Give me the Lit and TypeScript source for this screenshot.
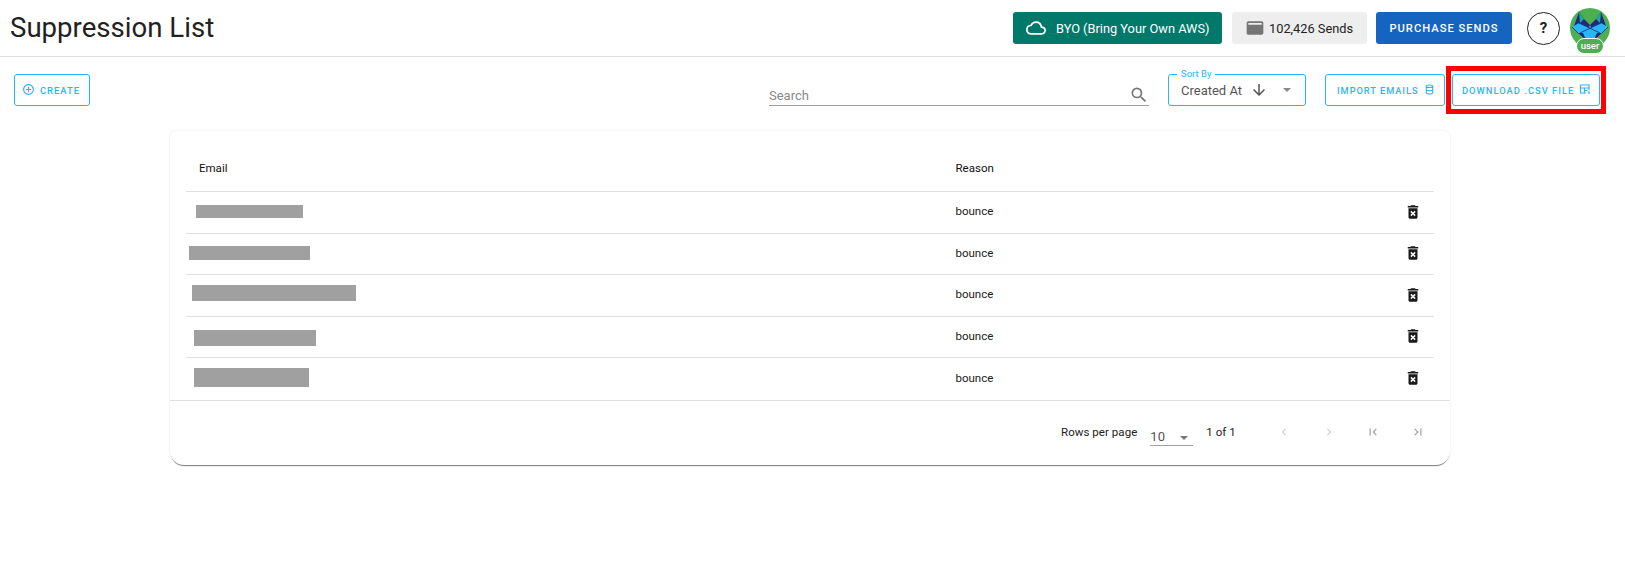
import { LitElement, html, css, svg } from "lit";
import { customElement } from "lit/decorators.js";

const rows = [
  { ml: 10, w: 107, h: 13, dy: -1 },
  { ml: 2.5, w: 121, h: 14, dy: -1 },
  { ml: 6, w: 164, h: 16, dy: -2 },
  { ml: 8, w: 122, h: 16, dy: 1 },
  { ml: 7.5, w: 115, h: 19, dy: -1 },
];

const trash = svg`<svg class="trash" viewBox="0 0 24 24" width="18" height="18"><path fill="#1a1a1a" d="M6 19c0 1.1.9 2 2 2h8c1.1 0 2-.9 2-2V7H6v12zm2.46-7.12 1.41-1.41L12 12.59l2.12-2.12 1.41 1.41L13.41 14l2.12 2.12-1.41 1.41L12 15.41l-2.12 2.12-1.41-1.41L10.59 14l-2.13-2.12zM15.5 4l-1-1h-5l-1 1H5v2h14V4z"/></svg>`;

@customElement("app-root")
export class AppRoot extends LitElement {
  static styles = css`
    :host { display: block; width: 1625px; height: 572px; background: #fff; font-family: Roboto, sans-serif; color: #212121; overflow: hidden; }
    .top { height: 57px; box-sizing: border-box; border-bottom: 1px solid #e0e0e0; display: flex; align-items: center; padding: 0 15px 0 10px; }
    h1 { margin: 0 auto 0 0; font-size: 27.6px; font-weight: 400; line-height: 56px; height: 56px; color: #212121; }
    .pill { height: 32px; border-radius: 3px; display: flex; align-items: center; box-sizing: border-box; font-size: 12.8px; }
    .byo { width: 209px; background: #00796b; color: #fff; margin-right: 10px; padding-left: 13px; gap: 10px; }
    .sends { width: 135px; background: #eee; color: #212121; padding-left: 13px; gap: 4px; margin-right: 9px; }
    .buy { width: 136px; background: #1565c0; color: #fff; justify-content: center; font-size: 11.2px; font-weight: 500; letter-spacing: 1px; margin-right: 15px; }
    .help { width: 33px; height: 33px; border: 1px solid #212121; border-radius: 50%; box-sizing: border-box; display: flex; align-items: center; justify-content: center; font-weight: 700; font-size: 15px; margin-right: 10px; }
    .avatar { position: relative; width: 40px; height: 40px; border-radius: 50%; background: #4caf50; }
    .avatar svg { display: block; }
    .chip { position: absolute; left: 6px; top: 30px; width: 28px; height: 16px; border-radius: 8px; background: #4caf50; border: 1px solid #fff; box-sizing: border-box; color: #fff; font-size: 9.5px; font-weight: 500; line-height: 14px; text-align: center; }

    .bar { display: flex; align-items: flex-start; padding: 17px 0 0 14px; height: 74px; box-sizing: border-box; }
    .obtn { height: 32px; box-sizing: border-box; border: 1px solid #29b6f6; border-radius: 3px; color: #29b6f6; display: flex; align-items: center; font-size: 9.4px; font-weight: 500; letter-spacing: 1px; white-space: nowrap; }
    .create { width: 76px; padding-left: 7px; gap: 5px; margin-right: 679px; }
    .create svg { margin-top: -2px; }
    .search { width: 380px; height: 32px; box-sizing: border-box; border-bottom: 1px solid #9e9e9e; display: flex; align-items: flex-end; justify-content: space-between; margin-right: 19px; color: #8a8a8a; font-size: 13px; padding-bottom: 2px; }
    .search svg { margin-bottom: -2px; margin-right: 0; }
    .sort { position: relative; width: 138px; height: 32px; box-sizing: border-box; border: 1px solid #29b6f6; border-radius: 3px; display: flex; align-items: center; padding-left: 12px; font-size: 13px; color: #555; margin-right: 19px; }
    .sort label { position: absolute; left: 8px; top: -6px; padding: 0 4px; background: #fff; color: #29b6f6; font-size: 9.5px; line-height: 10px; }
    .sort .arrow { margin-left: 8px; }
    .sort .caret { position: absolute; right: 14px; top: 13px; width: 0; height: 0; border: 4.5px solid transparent; border-top: 4.5px solid #8a8a8a; border-bottom: 0; }
    .import { width: 120px; padding-left: 11px; gap: 4px; margin-right: 7px; font-size: 9.2px; }
    .import svg { margin-top: -2px; }
    .download { position: relative; width: 148px; padding-left: 9px; gap: 5px; font-size: 9.4px; }
    .download svg { margin-top: -2px; }
    .download::after { content: ""; position: absolute; left: -7px; right: -7px; top: -9px; bottom: -9px; border: 5px solid #f00; box-sizing: border-box; pointer-events: none; }

    .card { width: 1280px; margin-left: 170px; height: 334px; border-radius: 6px 6px 14px 14px; box-shadow: 0 2px 1px -1px rgba(0,0,0,.5), 0 0 3px rgba(0,0,0,.1); box-sizing: border-box; background: #fff; }
    .tbl { padding: 0 16px; }
    .row { display: grid; grid-template-columns: 769.5px 1fr 18px; align-items: center; height: 41.5px; border-bottom: 1px solid #e0e0e0; box-sizing: border-box; font-size: 11.5px; padding-right: 12px; color: #212121; }
    .row > span { padding-bottom: 2px; }
    .row.head { height: 61px; font-weight: 400; color: #111; }
    .row.head span { padding: 14px 0 0; }
    .row.head span:first-child { padding-left: 13px; }
    .row:last-child { border-bottom: 0; }
    .redact { background: #a0a0a0; display: block; }
    .trash { display: block; margin-top: -1px; }
    .foot { border-top: 1px solid #e0e0e0; height: 63px; box-sizing: border-box; display: flex; align-items: center; font-size: 11.5px; padding-left: 891px; color: #212121; letter-spacing: 0.05px; }
    .rpp { margin-right: 13px; }
    .sel { position: relative; width: 43px; height: 20px; box-sizing: border-box; border-bottom: 1px solid #9e9e9e; font-size: 13px; color: #555; line-height: 22px; margin-top: 9px; margin-right: 13px; }
    .sel i { position: absolute; right: 5px; top: 10px; width: 0; height: 0; border: 4.5px solid transparent; border-top: 4.5px solid #757575; border-bottom: 0; }
    .pages { margin-right: 33px; width: 38px; }
    .nav { display: flex; gap: 30.5px; }
    .nav svg { display: block; }
  `;

  private fox() {
    return svg`<svg viewBox="0 0 40 40" width="40" height="40">
      <polygon points="9,4 4,18 16,24 20,17 14,11" fill="#1f2a7a"/>
      <polygon points="31,4 36,18 24,24 20,17 26,11" fill="#1f2a7a"/>
      <polygon points="9,4 14,11 10,15" fill="#26a69a"/>
      <polygon points="31,4 26,11 30,15" fill="#26a69a"/>
      <polygon points="2,19 9,15 20,20 31,15 38,19 32,25 27,25 24,32 16,32 13,25 8,25" fill="#29b6f6"/>
      <polygon points="8,25 13,25 16,32" fill="#1a237e"/>
      <polygon points="32,25 27,25 24,32" fill="#1a237e"/>
      <path d="M9 15 30 25M31 15 10 25M2 19 8 25M38 19 32 25" fill="none" stroke="#1a237e" stroke-width=".8"/>
    </svg>`;
  }

  render() {
    const chev = (d: string, c: string) => svg`<svg viewBox="0 0 24 24" width="14" height="14"><path fill="${c}" d="${d}"/></svg>`;
    return html`
      <div class="top">
        <h1>Suppression List</h1>
        <div class="pill byo">
          <svg viewBox="0 0 24 24" width="20" height="20"><path fill="#fff" d="M19.35 10.04A7.49 7.49 0 0 0 12 4C9.11 4 6.6 5.64 5.35 8.04A5.994 5.994 0 0 0 0 14c0 3.31 2.69 6 6 6h13c2.76 0 5-2.24 5-5 0-2.64-2.05-4.78-4.65-4.96zM19 18H6c-2.21 0-4-1.79-4-4 0-2.05 1.53-3.76 3.56-3.97l1.07-.11.5-.95A5.469 5.469 0 0 1 12 6c2.62 0 4.88 1.86 5.39 4.43l.3 1.5 1.53.11A2.98 2.98 0 0 1 22 15c0 1.65-1.35 3-3 3z"/></svg>
          <span>BYO (Bring Your Own AWS)</span>
        </div>
        <div class="pill sends">
          <svg viewBox="0 0 24 24" width="20" height="20"><path fill="#757575" d="M20 4H4c-1.11 0-2 .89-2 2v12c0 1.1.89 2 2 2h16c1.1 0 2-.9 2-2V6c0-1.11-.9-2-2-2zm0 4H4V6h16v2z"/></svg>
          <span>102,426 Sends</span>
        </div>
        <div class="pill buy">PURCHASE SENDS</div>
        <div class="help">?</div>
        <div class="avatar">${this.fox()}<div class="chip">user</div></div>
      </div>

      <div class="bar">
        <div class="obtn create">
          <svg viewBox="0 0 24 24" width="13" height="13"><path fill="#29b6f6" d="M13 7h-2v4H7v2h4v4h2v-4h4v-2h-4V7zm-1-5C6.48 2 2 6.48 2 12s4.48 10 10 10 10-4.48 10-10S17.52 2 12 2zm0 18c-4.41 0-8-3.59-8-8s3.59-8 8-8 8 3.59 8 8-3.59 8-8 8z"/></svg>
          <span>CREATE</span>
        </div>
        <div class="search">
          <span>Search</span>
          <svg viewBox="0 0 24 24" width="20" height="20"><path fill="#757575" d="M15.5 14h-.79l-.28-.27A6.47 6.47 0 0 0 16 9.5 6.5 6.5 0 1 0 9.5 16c1.61 0 3.09-.59 4.23-1.57l.27.28v.79l5 4.99L20.49 19l-4.99-5zm-6 0C7.01 14 5 11.99 5 9.5S7.01 5 9.5 5 14 7.01 14 9.5 11.99 14 9.5 14z"/></svg>
        </div>
        <div class="sort">
          <label>Sort By</label>
          <span>Created At</span>
          <svg class="arrow" viewBox="0 0 24 24" width="18" height="18"><path fill="#555" d="M20 12l-1.41-1.41L13 16.17V4h-2v12.17l-5.58-5.59L4 12l8 8 8-8z"/></svg>
          <span class="caret"></span>
        </div>
        <div class="obtn import">
          <span>IMPORT EMAILS</span>
          <svg viewBox="0 0 24 24" width="13" height="13"><path fill="none" stroke="#29b6f6" stroke-width="2" d="M6 6C6 3 18 3 18 6V18C18 21 6 21 6 18ZM6 6C6 9 18 9 18 6M6 12C6 15 18 15 18 12"/></svg>
        </div>
        <div class="obtn download">
          <span>DOWNLOAD .CSV FILE</span>
          <svg viewBox="0 0 24 24" width="12" height="12"><path fill="none" stroke="#29b6f6" stroke-width="2.4" d="M20 14V4H3v16h11M3 10h17M11 10v10M11 15h6"/><path fill="#29b6f6" d="M19 16h2v3h2l-3 3-3-3h2z"/></svg>
        </div>
      </div>

      <div class="card">
        <div class="tbl">
          <div class="row head"><span>Email</span><span>Reason</span><span></span></div>
          ${rows.map(
            (r) => html`<div class="row">
              <div><span class="redact" style="margin-left:${r.ml}px;width:${r.w}px;height:${r.h}px;transform:translateY(${r.dy}px)"></span></div>
              <span>bounce</span>
              ${trash}
            </div>`
          )}
        </div>
        <div class="foot">
          <span class="rpp">Rows per page</span>
          <div class="sel">10<i></i></div>
          <span class="pages">1 of 1</span>
          <div class="nav">
            ${chev("M15.41 7.41 14 6l-6 6 6 6 1.41-1.41L10.83 12z", "#d0d0d0")}
            ${chev("M10 6 8.59 7.41 13.17 12l-4.58 4.59L10 18l6-6z", "#d0d0d0")}
            ${chev("M18.41 16.59 13.82 12l4.59-4.59L17 6l-6 6 6 6zM6 6h2v12H6z", "#9e9e9e")}
            ${chev("M5.59 7.41 10.18 12l-4.59 4.59L7 18l6-6-6-6zM16 6h2v12h-2z", "#9e9e9e")}
          </div>
        </div>
      </div>
    `;
  }
}
